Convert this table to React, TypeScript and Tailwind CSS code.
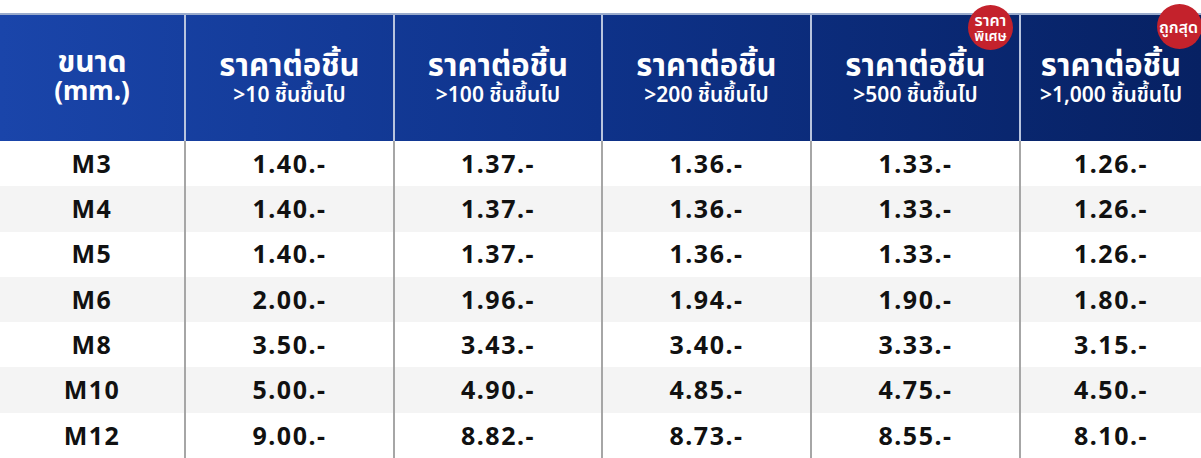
import { ReactNode } from 'react'

const tiers = [
  { label: '>10 ชิ้นขึ้นไป' },
  { label: '>100 ชิ้นขึ้นไป' },
  { label: '>200 ชิ้นขึ้นไป' },
  { label: '>500 ชิ้นขึ้นไป' },
  { label: '>1,000 ชิ้นขึ้นไป' },
]

const rows: [string, string[]][] = [
  ['M3', ['1.40.-', '1.37.-', '1.36.-', '1.33.-', '1.26.-']],
  ['M4', ['1.40.-', '1.37.-', '1.36.-', '1.33.-', '1.26.-']],
  ['M5', ['1.40.-', '1.37.-', '1.36.-', '1.33.-', '1.26.-']],
  ['M6', ['2.00.-', '1.96.-', '1.94.-', '1.90.-', '1.80.-']],
  ['M8', ['3.50.-', '3.43.-', '3.40.-', '3.33.-', '3.15.-']],
  ['M10', ['5.00.-', '4.90.-', '4.85.-', '4.75.-', '4.50.-']],
  ['M12', ['9.00.-', '8.82.-', '8.73.-', '8.55.-', '8.10.-']],
]

const cols = 'grid grid-cols-[184px_209px_208px_209px_209px_182px]'

function Badge({ children, className }: { children: ReactNode; className: string }) {
  return (
    <div
      className={`absolute w-[45px] h-[45px] rounded-full bg-[#c4222c] text-white flex flex-col items-center justify-center font-semibold ${className}`}
    >
      {children}
    </div>
  )
}

export default function App() {
  return (
    <div
      className="relative w-[1201px] h-[458px] bg-white overflow-hidden"
      style={{ fontFamily: '"Noto Sans", "Noto Sans Thai", "Noto Sans Thai UI", sans-serif' }}
    >
      <div className="h-[13px]" />
      {/* header */}
      <div
        className={`${cols} h-[128px] border-t-2 border-[#9aabcc] bg-gradient-to-r from-[#1a45aa] via-[#0e3289] to-[#072163] text-white`}
      >
        <div className="flex flex-col items-center justify-center font-bold pb-[6px]">
          <span className="text-[30px] leading-[30px]">ขนาด</span>
          <span className="text-[26px] leading-[28px]">(mm.)</span>
        </div>
        {tiers.map((t) => (
          <div
            key={t.label}
            className="flex flex-col items-center justify-center border-l-2 border-[#b8c4de] pb-[4px]"
          >
            <span className="font-bold text-[31px] leading-[36px]">ราคาต่อชิ้น</span>
            <span className="font-semibold text-[21px] leading-[24px]">{t.label}</span>
          </div>
        ))}
      </div>

      {/* body */}
      <div className="flex flex-col">
        {rows.map(([size, prices], i) => (
          <div
            key={size}
            className={`${cols} h-[45.3px] ${i % 2 === 1 ? 'bg-[#f4f4f4]' : 'bg-white'} text-[#111] font-bold text-[25px] tracking-[0.06em]`}
          >
            <div className="flex items-center justify-center">{size}</div>
            {prices.map((p, j) => (
              <div key={j} className="flex items-center justify-center border-l-2 border-[#a6a6a6]">
                {p}
              </div>
            ))}
          </div>
        ))}
      </div>

      <Badge className="left-[968px] top-[5px]">
        <span className="text-[16px] leading-[15px]">ราคา</span>
        <span className="text-[14px] leading-[15px]">พิเศษ</span>
      </Badge>
      <Badge className="left-[1157px] top-[4px]">
        <span className="text-[16px] leading-[18px] pr-[2px]">ถูกสุด</span>
      </Badge>
    </div>
  )
}
